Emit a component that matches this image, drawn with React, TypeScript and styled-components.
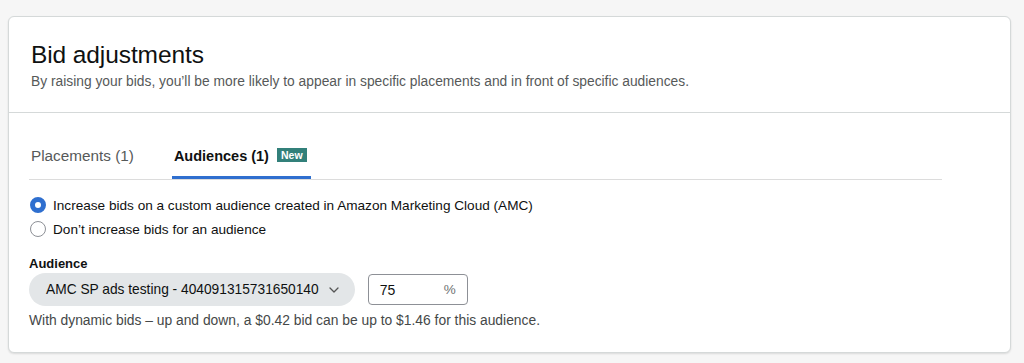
import React, { useState } from "react";
import styled, { createGlobalStyle } from "styled-components";

const Global = createGlobalStyle`
  html, body { margin: 0; padding: 0; background: #f6f6f6; }
  body { font-family: "Liberation Sans", Arial, sans-serif; color: #0f1111; }
  * { box-sizing: border-box; }
`;

const Page = styled.div`
  padding: 16px 13px 11px 8px;
`;

const Card = styled.section`
  background: #fff;
  border: 1px solid #d5d9d9;
  border-radius: 6px;
  box-shadow: 0 1px 2px rgba(15, 17, 17, 0.12);
`;

const Header = styled.header`
  padding: 23px 22px 21px;
  border-bottom: 1px solid #d5d9d9;
`;

const Title = styled.h2`
  margin: 0;
  font-size: 24.5px;
  line-height: 30px;
  font-weight: 400;
  color: #0f1111;
  letter-spacing: -0.1px;
`;

const Subtitle = styled.p`
  margin: 3px 0 0;
  font-size: 13.8px;
  line-height: 18px;
  color: #565959;
`;

const Body = styled.div`
  padding: 31px 68px 23px 20px;
`;

const TabList = styled.div`
  display: flex;
  gap: 34px;
  border-bottom: 1px solid #dcdcdc;
`;

const Tab = styled.button<{ $active?: boolean }>`
  display: flex;
  align-items: center;
  gap: 8px;
  background: none;
  border: none;
  padding: 2px 4px 10px 2px;
  margin: 0;
  font-family: inherit;
  font-size: ${(p) => (p.$active ? "14.5px" : "15.3px")};
  line-height: 20px;
  font-weight: ${(p) => (p.$active ? 700 : 400)};
  color: ${(p) => (p.$active ? "#0f1111" : "#565959")};
  border-bottom: 3px solid ${(p) => (p.$active ? "#2f6fcf" : "transparent")};
  cursor: pointer;
`;

const Badge = styled.span`
  display: inline-block;
  background: #32807a;
  color: #fff;
  font-size: 10.5px;
  font-weight: 700;
  line-height: 14px;
  padding: 0 4px;
  margin-top: -2px;
`;

const RadioGroup = styled.div`
  display: flex;
  flex-direction: column;
  margin-top: 13px;
`;

const RadioRow = styled.label`
  display: flex;
  align-items: center;
  gap: 7px;
  height: 24px;
  font-size: 13.6px;
  color: #0f1111;
  cursor: pointer;
`;

const RadioDot = styled.span<{ $checked?: boolean }>`
  width: 16px;
  height: 16px;
  border-radius: 50%;
  flex: none;
  margin-left: 1px;
  background: #fff;
  border: ${(p) => (p.$checked ? "5px solid #2f6fcf" : "1px solid #8d9096")};
`;

const FieldLabel = styled.div`
  margin-top: 14px;
  font-size: 13px;
  line-height: 18px;
  font-weight: 700;
  color: #0f1111;
`;

const FieldRow = styled.div`
  display: flex;
  align-items: center;
  gap: 13px;
`;

const Select = styled.button`
  display: flex;
  align-items: center;
  gap: 10px;
  height: 33px;
  padding: 0 16px 0 17px;
  border: none;
  border-radius: 17px;
  background: #e3e6e8;
  font-family: inherit;
  font-size: 13.75px;
  color: #0f1111;
  cursor: pointer;
`;

const InputBox = styled.div`
  display: flex;
  align-items: center;
  justify-content: space-between;
  width: 100px;
  height: 31px;
  padding: 0 11px 0 11px;
  border: 1px solid #8d9096;
  border-radius: 4px;
  font-size: 14px;
  color: #0f1111;
`;

const Unit = styled.span`
  color: #6f7373;
  font-size: 13.5px;
`;

const Help = styled.p`
  margin: 5px 0 0;
  font-size: 13.85px;
  line-height: 18px;
  color: #454848;
`;

export default function App() {
  const [tab, setTab] = useState(1);
  const [choice, setChoice] = useState(0);
  return (
    <>
      <Global />
      <Page>
        <Card>
          <Header>
            <Title>Bid adjustments</Title>
            <Subtitle>
              By raising your bids, you’ll be more likely to appear in specific placements and in front of specific audiences.
            </Subtitle>
          </Header>
          <Body>
            <TabList>
              <Tab $active={tab === 0} onClick={() => setTab(0)}>Placements (1)</Tab>
              <Tab $active={tab === 1} onClick={() => setTab(1)}>
                Audiences (1) <Badge>New</Badge>
              </Tab>
            </TabList>
            <RadioGroup>
              <RadioRow onClick={() => setChoice(0)}>
                <RadioDot $checked={choice === 0} />
                Increase bids on a custom audience created in Amazon Marketing Cloud (AMC)
              </RadioRow>
              <RadioRow onClick={() => setChoice(1)}>
                <RadioDot $checked={choice === 1} />
                Don’t increase bids for an audience
              </RadioRow>
            </RadioGroup>
            <FieldLabel>Audience</FieldLabel>
            <FieldRow>
              <Select>
                AMC SP ads testing - 404091315731650140
                <svg width="10" height="6" viewBox="0 0 10 6" fill="none">
                  <path d="M1 1l4 4 4-4" stroke="#555" strokeWidth="1.3" strokeLinecap="round" strokeLinejoin="round" />
                </svg>
              </Select>
              <InputBox>
                <span>75</span>
                <Unit>%</Unit>
              </InputBox>
            </FieldRow>
            <Help>With dynamic bids – up and down, a $0.42 bid can be up to $1.46 for this audience.</Help>
          </Body>
        </Card>
      </Page>
    </>
  );
}
